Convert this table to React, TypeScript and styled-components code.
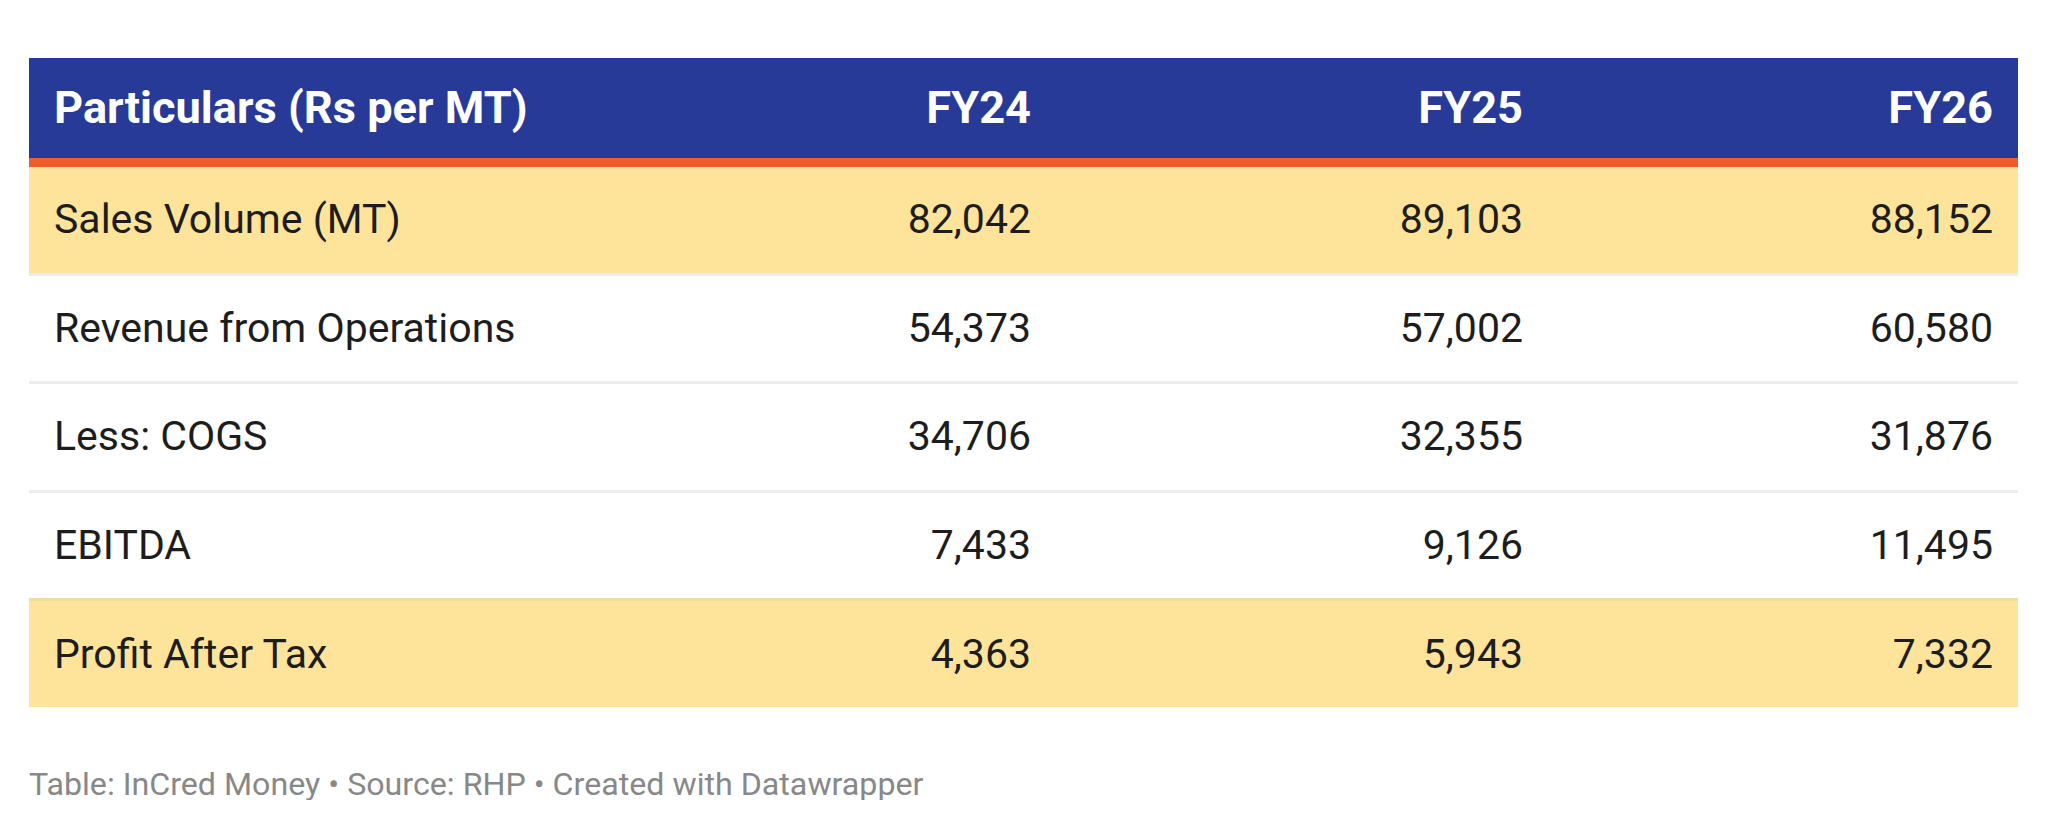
import React from "react";
import styled, { createGlobalStyle } from "styled-components";

const Global = createGlobalStyle`
  html, body { margin: 0; padding: 0; background: #ffffff; }
  body { font-family: Roboto, "Liberation Sans", Arial, sans-serif; }
`;

const Page = styled.div`
  padding: 58px 30px 0 29px;
  box-sizing: border-box;
  width: 2048px;
`;

const Table = styled.div`
  display: flex;
  flex-direction: column;
  width: 1989px;
`;

const cols = "530px 497px 492px 470px";

const HeadRow = styled.div`
  display: grid;
  grid-template-columns: ${cols};
  height: 100px;
  background: #283a97;
  border-bottom: 9px solid #f15a2b;
  align-items: center;
`;

const HeadCell = styled.div<{ $num?: boolean }>`
  color: #ffffff;
  font-weight: 700;
  font-size: 45.2px;
  line-height: 1;
  text-align: ${(p) => (p.$num ? "right" : "left")};
  padding: ${(p) => (p.$num ? "0 25px 0 0" : "0 0 0 25px")};
`;

const Row = styled.div<{ $hl?: boolean; $line?: string; $last?: boolean }>`
  display: grid;
  grid-template-columns: ${cols};
  align-items: center;
  height: 105.6px;
  background: ${(p) => (p.$hl ? "#fee49a" : "#ffffff")};
  border-bottom: ${(p) => (p.$last ? "none" : `3px solid ${p.$line || "#ededed"}`)};
`;

const Cell = styled.div<{ $num?: boolean }>`
  color: #1d1d1d;
  font-size: 41px;
  line-height: 1;
  text-align: ${(p) => (p.$num ? "right" : "left")};
  padding: ${(p) => (p.$num ? "0 25px 0 0" : "0 0 0 25px")};
`;

const Footer = styled.div`
  margin-top: 61px;
  font-size: 32.2px;
  line-height: 1;
  color: #888888;
`;

type R = { label: string; v: string[]; hl?: boolean; line?: string };

const rows: R[] = [
  { label: "Sales Volume (MT)", v: ["82,042", "89,103", "88,152"], hl: true },
  { label: "Revenue from Operations", v: ["54,373", "57,002", "60,580"] },
  { label: "Less: COGS", v: ["34,706", "32,355", "31,876"] },
  { label: "EBITDA", v: ["7,433", "9,126", "11,495"], line: "#efdc9e" },
  { label: "Profit After Tax", v: ["4,363", "5,943", "7,332"], hl: true },
];

export default function App() {
  return (
    <>
      <Global />
      <Page>
        <Table>
          <HeadRow>
            <HeadCell>Particulars (Rs per MT)</HeadCell>
            <HeadCell $num>FY24</HeadCell>
            <HeadCell $num>FY25</HeadCell>
            <HeadCell $num>FY26</HeadCell>
          </HeadRow>
          {rows.map((r, i) => (
            <Row key={r.label} $hl={r.hl} $line={r.line} $last={i === rows.length - 1}>
              <Cell>{r.label}</Cell>
              {r.v.map((x, j) => (
                <Cell key={j} $num>
                  {x}
                </Cell>
              ))}
            </Row>
          ))}
        </Table>
        <Footer>Table: InCred Money • Source: RHP • Created with Datawrapper</Footer>
      </Page>
    </>
  );
}
